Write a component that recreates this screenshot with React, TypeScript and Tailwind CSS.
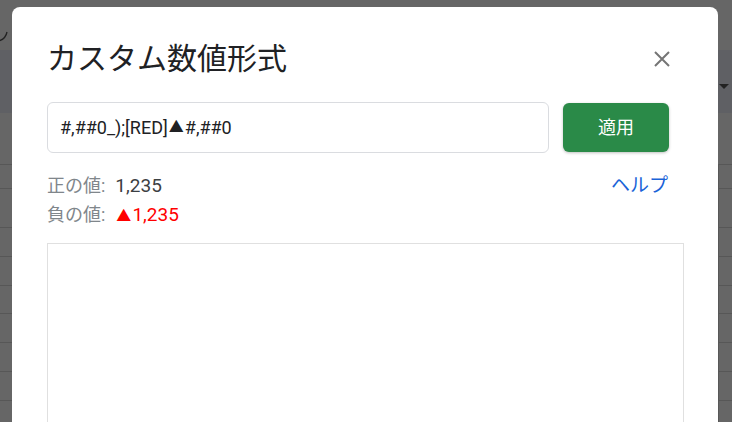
import React from "react";

const rowLines = [164, 188, 227, 256, 285, 313, 342, 371, 400];

export default function App() {
  return (
    <div
      className="relative w-[732px] h-[422px] overflow-hidden bg-[#666666]"
      style={{ fontFamily: "Roboto, 'Noto Sans CJK JP', sans-serif" }}
    >
      {/* sheet behind the overlay */}
      <div className="absolute inset-0">
        <div className="h-[50px]" />
        <div className="h-[63px] bg-[#5f6064]" />
        {rowLines.map((y) => (
          <div key={y} className="absolute left-0 right-0 h-px bg-[#575757]" style={{ top: y }} />
        ))}
        <div className="absolute left-[718px] top-[164px] bottom-0 w-px bg-[#585858]" />
        <div className="absolute left-[719px] top-[84px] w-0 h-0 border-l-[5px] border-r-[5px] border-t-[5px] border-l-transparent border-r-transparent border-t-[#222]" />
        <svg className="absolute left-0 top-[28px]" width="10" height="16" viewBox="0 0 10 16">
          <path d="M-2 13 C3 12 6 9 7 4" stroke="#222" strokeWidth="1.3" fill="none" />
        </svg>
      </div>

      {/* dialog */}
      <div className="absolute left-[12px] top-[7px] w-[706px] h-[440px] bg-white rounded-[8px] pl-[35px] pr-[34px]">
        <div className="flex items-center justify-between pt-[12px] h-[85px]">
          <h1
            className="text-[30px] leading-[40px] text-[#202124] font-normal"
            style={{ fontFamily: "'Noto Sans CJK JP', sans-serif" }}
          >
            カスタム数値形式
          </h1>
          <svg className="mr-[14px] mt-[6px]" width="16" height="16" viewBox="0 0 16 16">
            <path d="M1 1 L15 15 M15 1 L1 15" stroke="#757575" strokeWidth="2" />
          </svg>
        </div>

        <div className="flex items-center gap-[14px] mt-[10px]">
          <div className="w-[502px] h-[51px] border border-[#dadce0] rounded-[6px] flex items-center pl-[12px] text-[18px] text-[#202124]">
            #,##0_);[RED]
            <span className="text-[15px] mx-[1px]">▲</span>
            #,##0
          </div>
          <button className="w-[106px] h-[49px] rounded-[6px] bg-[#2a8a48] text-white text-[18px] shadow-[0_1px_3px_rgba(0,0,0,0.25)]">
            適用
          </button>
        </div>

        <div className="flex justify-between mt-[20px] pr-[16px]">
          <div className="flex flex-col gap-[3px] text-[18px] leading-[26px]">
            <div className="flex items-baseline">
              <span className="text-[#80868b]">正の値:</span>
              <span className="ml-[10px] text-[19px] text-[#3c4043]">1,235</span>
            </div>
            <div className="flex items-baseline">
              <span className="text-[#80868b]">負の値:</span>
              <span className="ml-[11px] text-[#ff0000] text-[15px]">▲</span>
              <span className="ml-[1px] text-[19px] text-[#ff0000]">1,235</span>
            </div>
          </div>
          <span className="text-[19px] leading-[26px] text-[#1a63d8]">ヘルプ</span>
        </div>

        <div className="mt-[14px] h-[200px] border border-[#e0e0e0]" />
      </div>
    </div>
  );
}
